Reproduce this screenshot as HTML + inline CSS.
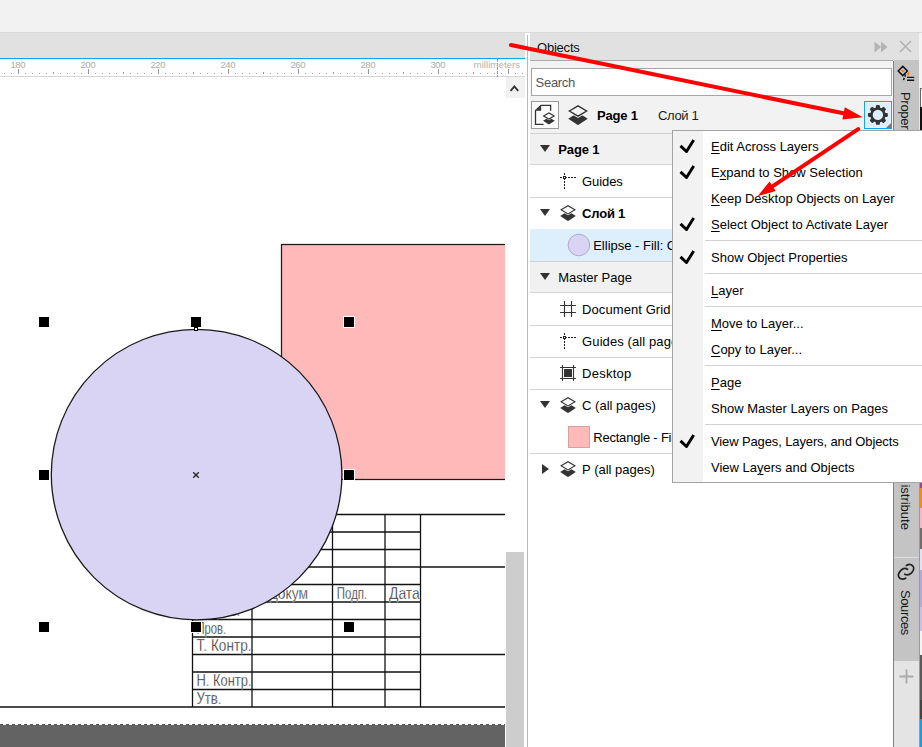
<!DOCTYPE html>
<html lang="en">
<head>
<meta charset="utf-8">
<title>Objects docker</title>
<style>
html,body{margin:0;padding:0;}
body{width:922px;height:747px;overflow:hidden;background:#fff;position:relative;font-family:"Liberation Sans",sans-serif;font-size:13px;color:#000;}
.abs{position:absolute;}
#topbar{left:0;top:0;width:922px;height:32px;background:#f2f2f2;}
#topline{left:0;top:32px;width:922px;height:1px;background:#dadada;}
#band{left:0;top:33px;width:525px;height:25px;background:#e1e1e1;}
#blue{left:0;top:58px;width:525px;height:1px;background:#0fa4f2;}
#ruler{left:0;top:59px;width:525px;height:17px;background:#fefefe;}
#rulerline{left:0;top:76px;width:525px;height:1px;background:#d6d6d6;}
#vsb{left:505px;top:77px;width:20px;height:670px;background:#fff;}
#vsbup{left:506px;top:77px;width:19px;height:21px;background:#f1f1f1;}
#vsbthumb{left:506px;top:552px;width:18px;height:195px;background:#cdcdcd;}
#split{left:527px;top:35px;width:1px;height:712px;background:#b9b9b9;}
/* panel */
#phead{left:530px;top:33px;width:389px;height:27px;background:#e1e1e1;}
#pheadline{left:530px;top:60px;width:363px;height:1px;background:#a9a9a9;}
#pbody{left:530px;top:61px;width:363px;height:72px;background:#f2f2f2;border-right:1px solid #fbf8f6;box-sizing:border-box;}
#plist{left:530px;top:133px;width:363px;height:614px;background:#fff;}
#pblue{left:893px;top:61px;width:1px;height:686px;background:#0fa4f2;}
#tabs{left:894px;top:60px;width:25px;height:687px;background:#c4c4c4;}
#search{left:531px;top:68px;width:359px;height:26px;border:1px solid #a6a6a6;background:#fff;}
.row{position:absolute;left:530px;width:363px;}
.row.h{background:#f0f0f0;}
.row.sel{background:#ddeefd;}
.row span{position:absolute;white-space:nowrap;}
.tx{font-size:13px;line-height:15px;white-space:nowrap;}
.tri{position:absolute;width:0;height:0;}
#menu{left:672px;top:130px;width:260px;height:351px;background:#fff;border:1px solid #a3a3a3;}
#gutter{left:0;top:0;width:30px;height:351px;background:#f2f2f2;}
.mi{position:absolute;left:38px;white-space:nowrap;font-size:13px;line-height:15px;color:#000;}
.mi u{text-decoration:underline;text-underline-offset:2px;}
.sep{position:absolute;left:32px;width:230px;height:1px;background:#d0d0d0;}
.chk{position:absolute;left:6px;}
</style>
</head>
<body>
<!-- top chrome -->
<div id="topbar" class="abs"></div>
<div id="topline" class="abs"></div>
<div id="band" class="abs"></div>
<div id="blue" class="abs"></div>
<div id="ruler" class="abs"></div>
<div id="rulerline" class="abs"></div>

<!-- canvas -->
<svg id="canvas" class="abs" style="left:0;top:77px" width="505" height="670" viewBox="0 77 505 670">
<!--CANVAS-->
<rect x="0" y="77" width="505" height="670" fill="#ffffff"/>
<rect x="0" y="725" width="505" height="22" fill="#636363"/>
<line x1="0" y1="724.5" x2="505" y2="724.5" stroke="#555" stroke-width="1" stroke-dasharray="3 3"/>
<g stroke="#111" stroke-width="1.3" shape-rendering="auto">
<line x1="192.5" y1="514.5" x2="505" y2="514.5"/>
<line x1="192.5" y1="532.0" x2="420.5" y2="532.0"/>
<line x1="192.5" y1="549.5" x2="420.5" y2="549.5"/>
<line x1="192.5" y1="567.0" x2="505" y2="567.0"/>
<line x1="192.5" y1="584.5" x2="420.5" y2="584.5"/>
<line x1="192.5" y1="602.0" x2="420.5" y2="602.0"/>
<line x1="192.5" y1="619.5" x2="420.5" y2="619.5"/>
<line x1="192.5" y1="637.0" x2="420.5" y2="637.0"/>
<line x1="192.5" y1="654.5" x2="505" y2="654.5"/>
<line x1="192.5" y1="672.0" x2="420.5" y2="672.0"/>
<line x1="192.5" y1="689.5" x2="420.5" y2="689.5"/>
<line x1="0" y1="707.0" x2="505" y2="707.0"/>
<line x1="192.5" y1="514.5" x2="192.5" y2="707"/>
<line x1="252" y1="514.5" x2="252" y2="707"/>
<line x1="332.5" y1="514.5" x2="332.5" y2="707"/>
<line x1="385" y1="514.5" x2="385" y2="707"/>
<line x1="420.5" y1="514.5" x2="420.5" y2="707"/>
</g>
<g font-family="'Liberation Sans',sans-serif" font-size="17" fill="#222" stroke="#fff" stroke-width="0.35">
<text x="251" y="598.8" textLength="57" lengthAdjust="spacingAndGlyphs">№ докум</text>
<text x="336.8" y="598.8" textLength="30.4" lengthAdjust="spacingAndGlyphs">Подп.</text>
<text x="389" y="598.8" textLength="30.7" lengthAdjust="spacingAndGlyphs">Дата</text>
<text x="196.5" y="616.3" textLength="43.5" lengthAdjust="spacingAndGlyphs">Разраб.</text>
<text x="196.5" y="633.8" textLength="29.7" lengthAdjust="spacingAndGlyphs">Пров.</text>
<text x="196.5" y="651.3" textLength="55" lengthAdjust="spacingAndGlyphs">Т. Контр.</text>
<text x="196.5" y="686.3" textLength="55" lengthAdjust="spacingAndGlyphs">Н. Контр.</text>
<text x="196.5" y="703.8" textLength="25" lengthAdjust="spacingAndGlyphs">Утв.</text>
</g>
<rect x="281.5" y="244.5" width="260" height="235" fill="#ffb9b9" stroke="#1a1a1a" stroke-width="1.25"/>
<circle cx="196.6" cy="474.6" r="145.3" fill="#d9d4f3" stroke="#1a1a1a" stroke-width="1.3"/>
<path d="M193.2 472.2l5.6 5.6m0-5.6l-5.6 5.6" stroke="#e4e0f6" stroke-width="2.6" fill="none"/><path d="M193.2 472.2l5.6 5.6m0-5.6l-5.6 5.6" stroke="#222" stroke-width="1.4" fill="none"/>
<rect x="38" y="316" width="12" height="12" fill="#fff"/>
<rect x="39" y="317" width="10" height="10" fill="#000"/>
<rect x="38" y="469" width="12" height="12" fill="#fff"/>
<rect x="39" y="470" width="10" height="10" fill="#000"/>
<rect x="38" y="621" width="12" height="12" fill="#fff"/>
<rect x="39" y="622" width="10" height="10" fill="#000"/>
<rect x="190" y="316" width="12" height="12" fill="#fff"/>
<rect x="191" y="317" width="10" height="10" fill="#000"/>
<rect x="190" y="621" width="12" height="12" fill="#fff"/>
<rect x="191" y="622" width="10" height="10" fill="#000"/>
<rect x="343" y="316" width="12" height="12" fill="#fff"/>
<rect x="344" y="317" width="10" height="10" fill="#000"/>
<rect x="343" y="469" width="12" height="12" fill="#fff"/>
<rect x="344" y="470" width="10" height="10" fill="#000"/>
<rect x="343" y="621" width="12" height="12" fill="#fff"/>
<rect x="344" y="622" width="10" height="10" fill="#000"/>
<rect x="194" y="327" width="4" height="4" fill="#000"/><rect x="195" y="328" width="2" height="2" fill="#fff"/>
<!--/CANVAS-->
</svg>

<!-- ruler svg -->
<svg id="rulersvg" class="abs" style="left:0;top:59px" width="525" height="18" viewBox="0 59 525 18">
<!--RULER-->
<g fill="#a2a2a2" shape-rendering="crispEdges">
<rect x="4" y="73" width="1" height="1"/>
<rect x="11" y="73" width="1" height="1"/>
<rect x="18" y="69" width="1" height="5" fill="#969696"/>
<rect x="25" y="73" width="1" height="1"/>
<rect x="32" y="73" width="1" height="1"/>
<rect x="39" y="73" width="1" height="1"/>
<rect x="46" y="73" width="1" height="1"/>
<rect x="53" y="72" width="1" height="2" fill="#969696"/>
<rect x="60" y="73" width="1" height="1"/>
<rect x="67" y="73" width="1" height="1"/>
<rect x="74" y="73" width="1" height="1"/>
<rect x="81" y="73" width="1" height="1"/>
<rect x="88" y="69" width="1" height="5" fill="#969696"/>
<rect x="95" y="73" width="1" height="1"/>
<rect x="102" y="73" width="1" height="1"/>
<rect x="109" y="73" width="1" height="1"/>
<rect x="116" y="73" width="1" height="1"/>
<rect x="123" y="72" width="1" height="2" fill="#969696"/>
<rect x="130" y="73" width="1" height="1"/>
<rect x="137" y="73" width="1" height="1"/>
<rect x="144" y="73" width="1" height="1"/>
<rect x="151" y="73" width="1" height="1"/>
<rect x="158" y="69" width="1" height="5" fill="#969696"/>
<rect x="165" y="73" width="1" height="1"/>
<rect x="172" y="73" width="1" height="1"/>
<rect x="179" y="73" width="1" height="1"/>
<rect x="186" y="73" width="1" height="1"/>
<rect x="193" y="72" width="1" height="2" fill="#969696"/>
<rect x="200" y="73" width="1" height="1"/>
<rect x="207" y="73" width="1" height="1"/>
<rect x="214" y="73" width="1" height="1"/>
<rect x="221" y="73" width="1" height="1"/>
<rect x="228" y="69" width="1" height="5" fill="#969696"/>
<rect x="235" y="73" width="1" height="1"/>
<rect x="242" y="73" width="1" height="1"/>
<rect x="249" y="73" width="1" height="1"/>
<rect x="256" y="73" width="1" height="1"/>
<rect x="263" y="72" width="1" height="2" fill="#969696"/>
<rect x="270" y="73" width="1" height="1"/>
<rect x="277" y="73" width="1" height="1"/>
<rect x="284" y="73" width="1" height="1"/>
<rect x="291" y="73" width="1" height="1"/>
<rect x="298" y="69" width="1" height="5" fill="#969696"/>
<rect x="305" y="73" width="1" height="1"/>
<rect x="312" y="73" width="1" height="1"/>
<rect x="319" y="73" width="1" height="1"/>
<rect x="326" y="73" width="1" height="1"/>
<rect x="333" y="72" width="1" height="2" fill="#969696"/>
<rect x="340" y="73" width="1" height="1"/>
<rect x="347" y="73" width="1" height="1"/>
<rect x="354" y="73" width="1" height="1"/>
<rect x="361" y="73" width="1" height="1"/>
<rect x="368" y="69" width="1" height="5" fill="#969696"/>
<rect x="375" y="73" width="1" height="1"/>
<rect x="382" y="73" width="1" height="1"/>
<rect x="389" y="73" width="1" height="1"/>
<rect x="396" y="73" width="1" height="1"/>
<rect x="403" y="72" width="1" height="2" fill="#969696"/>
<rect x="410" y="73" width="1" height="1"/>
<rect x="417" y="73" width="1" height="1"/>
<rect x="424" y="73" width="1" height="1"/>
<rect x="431" y="73" width="1" height="1"/>
<rect x="438" y="69" width="1" height="5" fill="#969696"/>
<rect x="445" y="73" width="1" height="1"/>
<rect x="452" y="73" width="1" height="1"/>
<rect x="459" y="73" width="1" height="1"/>
<rect x="466" y="73" width="1" height="1"/>
<rect x="473" y="72" width="1" height="2" fill="#969696"/>
<rect x="480" y="73" width="1" height="1"/>
<rect x="487" y="73" width="1" height="1"/>
<rect x="494" y="73" width="1" height="1"/>
<rect x="501" y="73" width="1" height="1"/>
<rect x="508" y="69" width="1" height="5" fill="#969696"/>
<rect x="515" y="73" width="1" height="1"/>
<rect x="522" y="73" width="1" height="1"/>
<path d="M497.5 59V77" stroke="#999" stroke-width="1" stroke-dasharray="3 1" fill="none"/>
</g>
<g font-family="'Liberation Sans',sans-serif" font-size="9.5" fill="#adadad" letter-spacing="-0.45">
<text x="10.5" y="67.6">180</text>
<text x="80.5" y="67.6">200</text>
<text x="150.5" y="67.6">220</text>
<text x="220.5" y="67.6">240</text>
<text x="290.5" y="67.6">260</text>
<text x="360.5" y="67.6">280</text>
<text x="430.5" y="67.6">300</text>
</g>
<text x="473.5" y="67.5" font-family="'Liberation Sans',sans-serif" font-size="9.5" fill="#b4b4b4" textLength="46.7" lengthAdjust="spacingAndGlyphs">millimeters</text>
<!--/RULER-->
</svg>

<div id="vsb" class="abs"></div>
<div id="vsbup" class="abs"></div>
<svg class="abs" style="left:509px;top:83px" width="11" height="10" viewBox="0 0 11 10"><path d="M1.6 7.8L5.4 3.4L9.2 7.8" fill="none" stroke="#333" stroke-width="1.9" stroke-linejoin="miter"/></svg>
<div id="vsbthumb" class="abs"></div>
<div id="split" class="abs"></div>

<!-- panel -->
<div id="phead" class="abs"></div>
<div id="pheadline" class="abs"></div>
<div id="pbody" class="abs"></div>
<div id="plist" class="abs"></div>
<div id="tabs" class="abs"></div>
<div id="pblue" class="abs"></div>
<!--PANEL-->
<svg width="0" height="0" style="position:absolute">
<defs>
<symbol id="lay" viewBox="0 0 16 16">
<polygon points="0.2,11 8,5.9 15.8,11 8,16.1" fill="#333"/>
<polygon points="1.1,4.8 8,0.7 14.9,4.8 8,8.9" style="fill:var(--bg,#fff);stroke:var(--bg,#fff)" stroke-width="2.5"/>
<polygon points="1.1,4.8 8,0.7 14.9,4.8 8,8.9" style="fill:var(--bg,#fff)" stroke="#333" stroke-width="1.15" stroke-linejoin="miter"/>
</symbol>
<symbol id="gd" viewBox="0 0 16 16">
<g fill="#222" shape-rendering="crispEdges">
<rect x="4" y="0" width="1" height="2"/><rect x="4" y="8" width="1" height="2"/><rect x="4" y="11" width="1" height="2"/><rect x="4" y="14" width="1" height="2"/>
<rect x="0" y="4" width="2" height="1"/><rect x="8" y="4" width="2" height="1"/><rect x="11" y="4" width="2" height="1"/><rect x="14" y="4" width="2" height="1"/>
<path d="M3 3h3v3h-1v1h-1v-1h-1z M4 4v1h1v-1z" fill-rule="evenodd"/>
<rect x="6" y="4" width="1" height="1" fill="#555"/>
</g>
</symbol>
<symbol id="grid" viewBox="0 0 16 16">
<g stroke="#333" stroke-width="1.15" fill="none" stroke-linecap="round">
<line x1="4.5" y1="0.5" x2="4.5" y2="15.5"/><line x1="11.5" y1="0.5" x2="11.5" y2="15.5"/>
<line x1="0.5" y1="4.5" x2="15.5" y2="4.5"/><line x1="0.5" y1="11.5" x2="15.5" y2="11.5"/>
</g>
</symbol>
<symbol id="desk" viewBox="0 0 16 16">
<g stroke="#333" stroke-width="1.1" fill="none" stroke-linecap="round">
<line x1="2.5" y1="0.5" x2="2.5" y2="15.5"/><line x1="13.5" y1="0.5" x2="13.5" y2="15.5"/>
<line x1="0.5" y1="2.5" x2="15.5" y2="2.5"/><line x1="0.5" y1="13.5" x2="15.5" y2="13.5"/>
</g>
<rect x="4" y="4" width="8" height="8" rx="0.5" fill="#333"/>
</symbol>
<symbol id="chk" viewBox="0 0 17 14">
<path d="M1.5 6.9 L7.5 12.5 L14.7 1" fill="none" stroke="#000" stroke-width="2.9" stroke-linejoin="miter"/>
</symbol>
</defs>
</svg>
<div class="abs tx" style="left:537px;top:40px;color:#111;letter-spacing:-0.21px">Objects</div>
<svg class="abs" style="left:874px;top:41px" width="14" height="12" viewBox="0 0 14 12"><path d="M0.5 0.5L7 6L0.5 11.5Z M7 0.5L13.5 6L7 11.5Z" fill="#b4b4b4"/></svg>
<svg class="abs" style="left:899px;top:40px" width="13" height="13" viewBox="0 0 13 13"><path d="M1 1L12 12M12 1L1 12" stroke="#b4b4b4" stroke-width="1.7" fill="none"/></svg>
<div id="search" class="abs"><span class="tx" style="position:absolute;left:3.6px;top:6px;color:#505560;letter-spacing:-0.3px">Search</span></div>
<div class="abs" style="left:531px;top:101px;width:26px;height:26px;border:1px solid #9a9a9a;background:#fcfcfc"></div>
<svg class="abs" style="left:531px;top:101px" width="28" height="28" viewBox="531 101 28 28">
<path d="M543.5 124.3H535.5V110.6L541 105.4H550.6V110.8" fill="none" stroke="#333" stroke-width="1.3"/>
<path d="M541.2 105.6V110.8H535.8Z" fill="#333"/>
<polygon points="543,120.8 548.9,117.2 554.8,120.8 548.9,124.6" fill="#333"/>
<polygon points="543.6,116 548.9,113 554.2,116 548.9,119" fill="#fcfcfc" stroke="#fcfcfc" stroke-width="2"/>
<polygon points="543.6,116 548.9,113 554.2,116 548.9,119" fill="#fcfcfc" stroke="#333" stroke-width="1.1"/>
</svg>
<svg class="abs" style="left:568px;top:105px;--bg:#f4f4f4" width="20" height="20"><use href="#lay"/></svg>
<div class="abs tx" style="left:597px;top:108px;font-weight:bold;color:#000;letter-spacing:-0.2px">Page 1</div>
<div class="abs tx" style="left:658px;top:108px;color:#1a1a1a;letter-spacing:-0.35px">Слой 1</div>
<div class="abs" style="left:864px;top:101px;width:26px;height:26px;border:1px solid #10a5f4;background:#ddefff;box-shadow:inset 0 0 0 1px #eaf5ff"></div>
<svg class="abs" style="left:864px;top:101px" width="28" height="28" viewBox="864 101 28 28"><path d="M876.77,108.30 L877.01,106.04 L878.79,106.04 L879.03,108.30 L881.77,109.43 L883.53,108.01 L884.79,109.27 L883.37,111.03 L884.50,113.77 L886.76,114.01 L886.76,115.79 L884.50,116.03 L883.37,118.77 L884.79,120.53 L883.53,121.79 L881.77,120.37 L879.03,121.50 L878.79,123.76 L877.01,123.76 L876.77,121.50 L874.03,120.37 L872.27,121.79 L871.01,120.53 L872.43,118.77 L871.30,116.03 L869.04,115.79 L869.04,114.01 L871.30,113.77 L872.43,111.03 L871.01,109.27 L872.27,108.01 L874.03,109.43Z M884.1999999999999,114.9 A6.3,6.3 0 1 0 871.6,114.9 A6.3,6.3 0 1 0 884.1999999999999,114.9Z" fill="#333" fill-rule="evenodd" stroke="#333" stroke-width="2.2" stroke-linejoin="round"/><polygon points="891,123 891,128 886,128" fill="#777"/></svg>
<div class="abs" style="left:530px;top:133px;width:363px;height:1px;background:#d0d0d0"></div>
<div class="row" style="top:134px;height:30px;background:#f1f1f1">
<svg style="position:absolute;left:10px;top:11px" width="10" height="7"><polygon points="0,0 10,0 5,7" fill="#333"/></svg>
<span class="tx" style="left:28.200000000000045px;top:8px;letter-spacing:-0.1px"><b>Page 1</b></span>
</div>
<div class="abs" style="left:530px;top:164px;width:363px;height:1px;background:#d2d2d2"></div>
<div class="row" style="top:165px;height:32px;background:#fff">
<svg style="position:absolute;left:30px;top:8px" width="16" height="16"><use href="#gd"/></svg>
<span class="tx" style="left:52.10000000000002px;top:9px;letter-spacing:-0.1px">Guides</span>
</div>
<div class="abs" style="left:530px;top:197px;width:363px;height:1px;background:#d2d2d2"></div>
<div class="row" style="top:198px;height:31px;background:#fff">
<svg style="position:absolute;left:10px;top:11px" width="10" height="7"><polygon points="0,0 10,0 5,7" fill="#333"/></svg>
<svg style="position:absolute;left:30px;top:7px" width="16" height="16"><use href="#lay"/></svg>
<span class="tx" style="left:52.10000000000002px;top:8px;letter-spacing:-0.2px"><b>Слой 1</b></span>
</div>
<div class="row" style="top:229px;height:32px;background:#ddeefd">
<svg style="position:absolute;left:37px;top:4px" width="24" height="24"><circle cx="11.9" cy="12" r="10.8" fill="#d9d4f3" stroke="#b3aacb" stroke-width="1"/></svg>
<span class="tx" style="left:63.200000000000045px;top:9px;letter-spacing:0px">Ellipse - Fill: C</span>
</div>
<div class="abs" style="left:530px;top:261px;width:363px;height:1px;background:#d2d2d2"></div>
<div class="row" style="top:262px;height:30px;background:#f1f1f1">
<svg style="position:absolute;left:10px;top:11px" width="10" height="7"><polygon points="0,0 10,0 5,7" fill="#333"/></svg>
<span class="tx" style="left:28.200000000000045px;top:8px;letter-spacing:0px">Master Page</span>
</div>
<div class="abs" style="left:530px;top:292px;width:363px;height:1px;background:#d2d2d2"></div>
<div class="row" style="top:293px;height:32px;background:#fff">
<svg style="position:absolute;left:30px;top:8px" width="16" height="16"><use href="#grid"/></svg>
<span class="tx" style="left:52.10000000000002px;top:9px;letter-spacing:0.08px">Document Grid</span>
</div>
<div class="abs" style="left:530px;top:325px;width:363px;height:1px;background:#d2d2d2"></div>
<div class="row" style="top:326px;height:31px;background:#fff">
<svg style="position:absolute;left:30px;top:7px" width="16" height="16"><use href="#gd"/></svg>
<span class="tx" style="left:52.10000000000002px;top:8px;letter-spacing:0.1px">Guides (all pages)</span>
</div>
<div class="abs" style="left:530px;top:357px;width:363px;height:1px;background:#d2d2d2"></div>
<div class="row" style="top:358px;height:31px;background:#fff">
<svg style="position:absolute;left:30px;top:7px" width="16" height="16"><use href="#desk"/></svg>
<span class="tx" style="left:52.10000000000002px;top:8px;letter-spacing:0.25px">Desktop</span>
</div>
<div class="abs" style="left:530px;top:389px;width:363px;height:1px;background:#d2d2d2"></div>
<div class="row" style="top:390px;height:31px;background:#fff">
<svg style="position:absolute;left:10px;top:11px" width="10" height="7"><polygon points="0,0 10,0 5,7" fill="#333"/></svg>
<svg style="position:absolute;left:30px;top:7px" width="16" height="16"><use href="#lay"/></svg>
<span class="tx" style="left:52.10000000000002px;top:8px;letter-spacing:0px">C (all pages)</span>
</div>
<div class="row" style="top:421px;height:32px;background:#fff">
<div style="position:absolute;left:38px;top:5px;width:20px;height:20px;background:#ffb9b9;border:1px solid #d9a0a0"></div>
<span class="tx" style="left:63.200000000000045px;top:9px;letter-spacing:-0.2px">Rectangle - Fill: C</span>
</div>
<div class="abs" style="left:530px;top:453px;width:363px;height:1px;background:#d2d2d2"></div>
<div class="row" style="top:454px;height:31px;background:#fff">
<svg style="position:absolute;left:12px;top:10px" width="7" height="10"><polygon points="0,0 7,5 0,10" fill="#333"/></svg>
<svg style="position:absolute;left:30px;top:7px" width="16" height="16"><use href="#lay"/></svg>
<span class="tx" style="left:52.10000000000002px;top:8px;letter-spacing:0px">P (all pages)</span>
</div>
<div class="abs" style="left:894px;top:661px;width:25px;height:86px;background:#e4e4e4"></div>
<div class="abs" style="left:894px;top:557px;width:25px;height:1px;background:#dcdcdc"></div>
<svg class="abs" style="left:899px;top:669px" width="15" height="15"><path d="M7.5 0.5V14.5M0.5 7.5H14.5" stroke="#aaa" stroke-width="1.8"/></svg>
<div class="abs" style="left:913px;top:91.6px;transform-origin:0 0;transform:rotate(90deg);white-space:nowrap;font-size:13px;line-height:15px;color:#1a1a1a;letter-spacing:-0.3px">Properties</div>
<div class="abs" style="left:894px;top:485px;width:25px;height:70px;overflow:hidden">
<div class="abs" style="left:19px;top:-10px;transform-origin:0 0;transform:rotate(90deg);white-space:nowrap;font-size:13px;line-height:15px;color:#1a1a1a;letter-spacing:0px">Distribute</div>
</div>
<div class="abs" style="left:913px;top:590px;transform-origin:0 0;transform:rotate(90deg);white-space:nowrap;font-size:13px;line-height:15px;color:#1a1a1a;letter-spacing:-0.39px">Sources</div>
<svg class="abs" style="left:897px;top:563px" width="18" height="18" viewBox="0 0 18 18"><g fill="none" stroke="#222" stroke-width="1.75" stroke-linecap="round"><path d="M10.48 6.29 C8.65 5.06 5.92 5.29 3.65 7.57 C1.37 9.84 0.46 13.03 2.74 15.08 C4.56 16.44 6.83 16.21 8.65 15.21"/><path d="M9.47 2.47 C11.39 1.19 14.12 1.19 15.71 2.79 C17.3 4.61 16.85 7.57 14.57 9.84 C12.3 11.89 10.02 12.34 7.84 11.21"/></g></svg>
<svg class="abs" style="left:897px;top:64px" width="20" height="20" viewBox="0 0 20 20"><g fill="none" stroke="#111" stroke-width="1.5"><path d="M5.8 2.4L10.4 7L5.8 11.6L1.2 7Z"/><path d="M10 13.4h7.2M10 16.3h7.2" stroke-width="1.4"/><path d="M8.6 10.6L6 17.2" stroke-dasharray="2.2 1.3"/></g><path d="M3.9 6.3h3.8L5.8 8.4Z" fill="#ff6a00"/><ellipse cx="11.4" cy="9.8" rx="0.75" ry="1.9" fill="#ff6a00"/></svg>
<div class="abs" style="left:919px;top:33px;width:3px;height:55px;background:#f3f3f3"></div>
<div class="abs" style="left:919px;top:88px;width:1px;height:42px;background:#e6e6e6"></div>
<div class="abs" style="left:920px;top:88px;width:2px;height:19px;background:#fff;border-left:1px solid #666;border-top:1px solid #666;box-sizing:border-box"></div>
<div class="abs" style="left:920px;top:107px;width:2px;height:23px;background:#111"></div>
<div class="abs" style="left:920px;top:482px;width:2px;height:6px;background:#a040a8"></div>
<div class="abs" style="left:920px;top:488px;width:2px;height:20px;background:#f08c1e"></div>
<div class="abs" style="left:920px;top:508px;width:2px;height:20px;background:#f4b8c8"></div>
<div class="abs" style="left:920px;top:528px;width:2px;height:21px;background:#756b68"></div>
<div class="abs" style="left:920px;top:549px;width:2px;height:21px;background:#e4e0f8"></div>
<div class="abs" style="left:920px;top:570px;width:2px;height:37px;background:#b4a8e0"></div>
<div class="abs" style="left:920px;top:607px;width:2px;height:24px;background:#c8c0e8"></div>
<div class="abs" style="left:920px;top:631px;width:2px;height:24px;background:#f4f4f4"></div>
<div class="abs" style="left:920px;top:655px;width:2px;height:45px;background:#5a5a5a"></div>
<div class="abs" style="left:920px;top:700px;width:2px;height:19px;background:#444"></div>
<div class="abs" style="left:920px;top:719px;width:2px;height:28px;background:#1e9be0"></div>
<div class="abs" style="left:919px;top:482px;width:1px;height:265px;background:#9a9a9a"></div>
<!--/PANEL-->

<!--MENU-->
<div id="menu" class="abs">
<div id="gutter" class="abs"></div>
<div class="mi" style="top:8px"><u>E</u>dit Across Layers</div>
<svg class="chk" style="top:8px" width="17" height="14"><use href="#chk"/></svg>
<div class="mi" style="top:34px">E<u>x</u>pand to Show Selection</div>
<svg class="chk" style="top:34px" width="17" height="14"><use href="#chk"/></svg>
<div class="mi" style="top:60px"><u>K</u>eep Desktop Objects on Layer</div>
<div class="mi" style="top:86px"><u>S</u>elect Object to Activate Layer</div>
<svg class="chk" style="top:86px" width="17" height="14"><use href="#chk"/></svg>
<div class="mi" style="top:119px">Show Object Properties</div>
<svg class="chk" style="top:119px" width="17" height="14"><use href="#chk"/></svg>
<div class="mi" style="top:152px"><u>L</u>ayer</div>
<div class="mi" style="top:185px"><u>M</u>ove to Layer...</div>
<div class="mi" style="top:211px"><u>C</u>opy to Layer...</div>
<div class="mi" style="top:244px"><u>P</u>age</div>
<div class="mi" style="top:270px">Show Master Layers on Pages</div>
<div class="mi" style="top:303px"><span style="letter-spacing:-0.12px">View Pages, Layers, and Ob<u>j</u>ects</span></div>
<svg class="chk" style="top:303px" width="17" height="14"><use href="#chk"/></svg>
<div class="mi" style="top:329px">View La<u>y</u>ers and Objects</div>
<div class="sep" style="top:109px"></div>
<div class="sep" style="top:142px"></div>
<div class="sep" style="top:175px"></div>
<div class="sep" style="top:234px"></div>
<div class="sep" style="top:293px"></div>
</div>
<!--/MENU-->

<!--OVERLAY-->
<svg class="abs" style="left:0;top:0;pointer-events:none" width="922" height="747">
<line x1="511" y1="45" x2="844.6" y2="113.6" stroke="#fe0000" stroke-width="4.1" stroke-linecap="round"/>
<polygon points="862.7,117.3 842.4,119.4 844.8,107.3" fill="#fe0000"/>
<line x1="858.2" y1="129.2" x2="771.7" y2="186.8" stroke="#fe0000" stroke-width="4.0" stroke-linecap="round"/>
<polygon points="757.6,196.2 769.5,181.6 775.7,190.9" fill="#fe0000"/>
</svg>
<!--/OVERLAY-->
</body>
</html>
